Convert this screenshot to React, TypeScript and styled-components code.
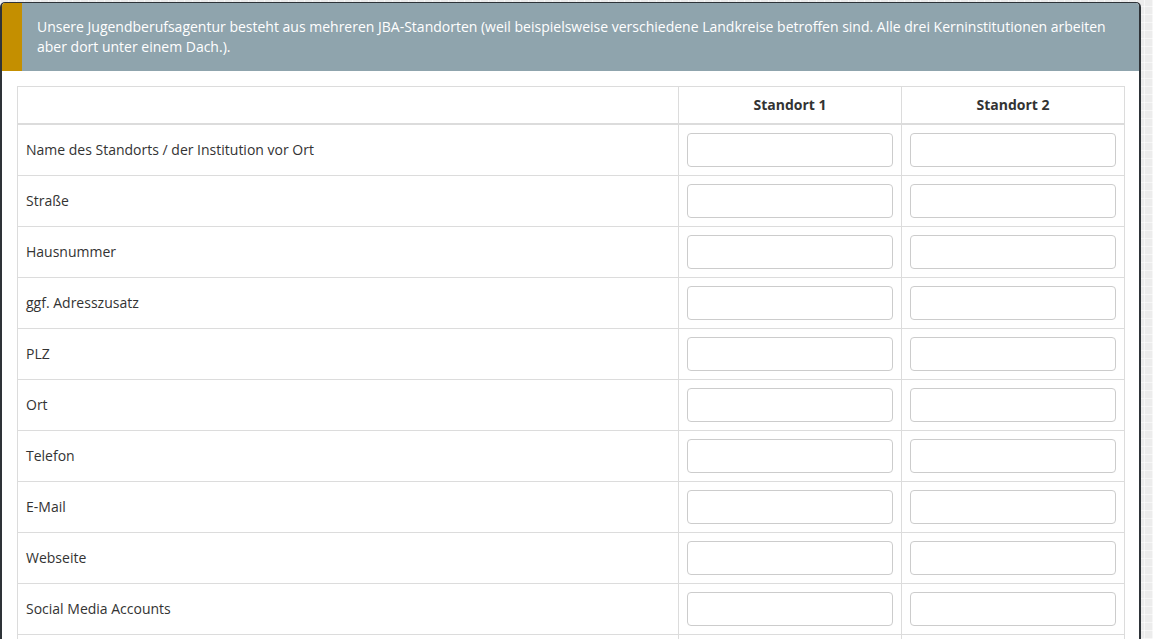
import React from "react";
import styled, { createGlobalStyle } from "styled-components";

const GlobalStyle = createGlobalStyle`
  html, body {
    margin: 0;
    padding: 0;
  }
  body {
    font-family: "Open Sans", "Liberation Sans", Arial, sans-serif;
    font-size: 14px;
    color: #333;
    background-color: #ececec;
    background-image:
      repeating-linear-gradient(0deg, rgba(255,255,255,0.55) 0 1px, transparent 1px 8px),
      repeating-linear-gradient(90deg, rgba(255,255,255,0.55) 0 1px, transparent 1px 8px);
    overflow: hidden;
  }
`;

const Page = styled.div`
  padding-top: 2px;
  width: 1141px;
`;

const Card = styled.section`
  background: #fff;
  border: 2px solid #2e3338;
  border-top-width: 1px;
  border-bottom: none;
  border-radius: 5px 5px 0 0;
  overflow: hidden;
  min-height: 700px;
`;

const Notice = styled.div`
  display: flex;
  background: #8fa4ad;
  color: #fff;
`;

const Stripe = styled.div`
  flex: 0 0 20px;
  background: #c48f00;
`;

const NoticeText = styled.p`
  margin: 0;
  padding: 14px 16px 14px 15px;
  line-height: 20px;
  font-size: 14px;
`;

const Body = styled.div`
  padding: 15px 15px 0 15px;
`;

const Table = styled.table`
  width: 1107px;
  border-collapse: collapse;
  table-layout: fixed;
`;

const HeadCell = styled.th`
  height: 36px;
  padding: 0 8px;
  border: 1px solid #dcdcdc;
  border-bottom: 2px solid #dcdcdc;
  font-weight: 700;
  text-align: center;
  font-size: 14px;
  color: #333;
`;

const Caption = styled.span`
  display: block;
  margin-top: -2px;
`;

const LabelCell = styled.td`
  height: 50px;
  padding: 0 8px;
  border: 1px solid #dcdcdc;
  vertical-align: middle;
  font-size: 14px;
`;

const InputCell = styled.td`
  height: 50px;
  padding: 0 8px;
  border: 1px solid #dcdcdc;
  vertical-align: middle;
`;

const Field = styled.input`
  display: block;
  box-sizing: border-box;
  width: 100%;
  height: 34px;
  border: 1px solid #cccccc;
  border-radius: 4px;
  background: #fff;
  font-family: inherit;
  font-size: 14px;
  padding: 6px 10px;
  outline: none;
`;

const rows = [
  "Name des Standorts / der Institution vor Ort",
  "Straße",
  "Hausnummer",
  "ggf. Adresszusatz",
  "PLZ",
  "Ort",
  "Telefon",
  "E-Mail",
  "Webseite",
  "Social Media Accounts",
  "",
];

export default function App() {
  return (
    <>
      <GlobalStyle />
      <Page>
        <Card>
          <Notice>
            <Stripe />
            <NoticeText>
              Unsere Jugendberufsagentur besteht aus mehreren JBA-Standorten (weil
              beispielsweise verschiedene Landkreise betroffen sind. Alle drei
              Kerninstitutionen arbeiten aber dort unter einem Dach.).
            </NoticeText>
          </Notice>
          <Body>
            <Table>
              <colgroup>
                <col style={{ width: 661 }} />
                <col style={{ width: 223 }} />
                <col style={{ width: 223 }} />
              </colgroup>
              <thead>
                <tr>
                  <HeadCell />
                  <HeadCell>
                    <Caption>Standort 1</Caption>
                  </HeadCell>
                  <HeadCell>
                    <Caption>Standort 2</Caption>
                  </HeadCell>
                </tr>
              </thead>
              <tbody>
                {rows.map((label, i) => (
                  <tr key={i}>
                    <LabelCell>
                      <Caption>{label}</Caption>
                    </LabelCell>
                    <InputCell>
                      <Field type="text" />
                    </InputCell>
                    <InputCell>
                      <Field type="text" />
                    </InputCell>
                  </tr>
                ))}
              </tbody>
            </Table>
          </Body>
        </Card>
      </Page>
    </>
  );
}
